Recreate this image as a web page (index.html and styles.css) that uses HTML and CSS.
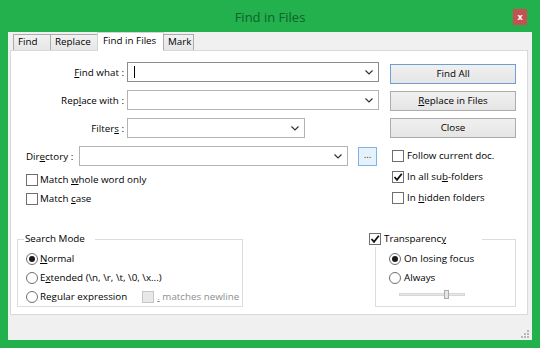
FILE: index.html
```html
<!DOCTYPE html>
<html lang="en">
<head>
    <meta charset="UTF-8">
    <title>Find in Files</title>
    <link rel="stylesheet" href="styles.css">
</head>
<body>
    <div class="window">
        <!-- Title bar -->
        <div class="titlebar">
            <span class="title">Find in Files</span>
            <span class="close">x</span>
        </div>

        <div class="client">
            <!-- Tabs -->
            <div class="tabs">
                <div class="tab tab-find">Find</div>
                <div class="tab tab-replace">Replace</div>
                <div class="tab tab-files active">Find in Files</div>
                <div class="tab tab-mark">Mark</div>
            </div>

            <div class="panel">
                <div class="top">
                    <div class="fields">
                        <div class="row">
                            <span class="lbl"><u>F</u>ind what :</span>
                            <div class="combo combo-wide focus">
                                <span class="caret"></span>
                                <svg class="chev" width="8" height="5" viewBox="0 0 8 5"><polyline points="0.5,0.5 4,4 7.5,0.5" fill="none" stroke="#333" stroke-width="1.2"/></svg>
                            </div>
                        </div>
                        <div class="row">
                            <span class="lbl">Rep<u>l</u>ace with :</span>
                            <div class="combo combo-wide">
                                <svg class="chev" width="8" height="5" viewBox="0 0 8 5"><polyline points="0.5,0.5 4,4 7.5,0.5" fill="none" stroke="#333" stroke-width="1.2"/></svg>
                            </div>
                        </div>
                        <div class="row">
                            <span class="lbl">Filter<u>s</u> :</span>
                            <div class="combo combo-filters">
                                <svg class="chev" width="8" height="5" viewBox="0 0 8 5"><polyline points="0.5,0.5 4,4 7.5,0.5" fill="none" stroke="#333" stroke-width="1.2"/></svg>
                            </div>
                        </div>
                        <div class="row row-dir">
                            <span class="lbl lbl-dir">Dir<u>e</u>ctory :</span>
                            <div class="combo combo-dir">
                                <svg class="chev" width="8" height="5" viewBox="0 0 8 5"><polyline points="0.5,0.5 4,4 7.5,0.5" fill="none" stroke="#333" stroke-width="1.2"/></svg>
                            </div>
                            <div class="browse">...</div>
                        </div>
                        <div class="check"><span class="box"></span><span>Match <u>w</u>hole word only</span></div>
                        <div class="check"><span class="box"></span><span>Match <u>c</u>ase</span></div>
                    </div>

                    <div class="actions">
                        <div class="btn default">Find All</div>
                        <div class="btn"><u>R</u>eplace in Files</div>
                        <div class="btn">Close</div>
                        <div class="check check-right"><span class="box"></span><span>Follow current doc.</span></div>
                        <div class="check check-right"><span class="box checked"><svg width="10" height="10" viewBox="0 0 10 10"><polyline points="1.5,5 4,7.8 8.8,1.8" fill="none" stroke="#111" stroke-width="1.8"/></svg></span><span>In all su<u>b</u>-folders</span></div>
                        <div class="check check-right"><span class="box"></span><span>In <u>h</u>idden folders</span></div>
                    </div>
                </div>

                <div class="groups">
                    <fieldset class="group group-mode">
                        <legend>Search Mode</legend>
                        <div class="radio"><span class="dot on"></span><span><u>N</u>ormal</span></div>
                        <div class="radio"><span class="dot"></span><span>E<u>x</u>tended (\n, \r, \t, \0, \x...)</span></div>
                        <div class="radio"><span class="dot"></span><span>Re<u>g</u>ular expression</span>
                            <span class="box disabled"></span><span class="muted"><u>.</u> matches newline</span>
                        </div>
                    </fieldset>

                    <fieldset class="group group-trans">
                        <legend><span class="box checked"><svg width="10" height="10" viewBox="0 0 10 10"><polyline points="1.5,5 4,7.8 8.8,1.8" fill="none" stroke="#111" stroke-width="1.8"/></svg></span><span>Transparenc<u>y</u></span></legend>
                        <div class="radio"><span class="dot on"></span><span>On losing focus</span></div>
                        <div class="radio"><span class="dot"></span><span>Always</span></div>
                        <div class="slider">
                            <div class="track"><span class="thumb"></span></div>
                        </div>
                    </fieldset>
                </div>
            </div>

            <div class="status">
                <svg class="grip" width="8" height="8" viewBox="0 0 8 8">
                    <rect x="6" y="0" width="2" height="2" fill="#b9b9b9"/>
                    <rect x="3" y="3" width="2" height="2" fill="#b9b9b9"/>
                    <rect x="6" y="3" width="2" height="2" fill="#b9b9b9"/>
                    <rect x="0" y="6" width="2" height="2" fill="#b9b9b9"/>
                    <rect x="3" y="6" width="2" height="2" fill="#b9b9b9"/>
                    <rect x="6" y="6" width="2" height="2" fill="#b9b9b9"/>
                </svg>
            </div>
        </div>
    </div>
</body>
</html>
```

FILE: styles.css
```css
body {
    margin: 0;
    font-family: 'Open Sans', sans-serif;
    font-size: 9.8px;
    color: #000;
}

u {
    text-decoration: underline;
    text-underline-offset: 1px;
}

.window {
    width: 540px;
    height: 348px;
    background: #22b14c;
    display: flex;
    flex-direction: column;
}

/* Title bar */

.titlebar {
    height: 32px;
    display: grid;
    grid-template-columns: 1fr auto 1fr;
    align-items: center;
}

.title {
    grid-column: 2;
    font-size: 13px;
    color: #11612a;
    padding-top: 1px;
}

.close {
    grid-column: 3;
    justify-self: end;
    margin-right: 13px;
    margin-top: 2px;
    width: 14px;
    height: 16px;
    background: #c75050;
    color: #fff;
    font-size: 9px;
    font-weight: bold;
    line-height: 15px;
    text-align: center;
}

/* Client area */

.client {
    flex: 1;
    margin: 0 8px 8px;
    background: #f0f0f0;
    display: flex;
    flex-direction: column;
}

.tabs {
    height: 18px;
    display: flex;
    align-items: flex-end;
    padding-left: 5px;
    position: relative;
    z-index: 1;
}

.tab {
    height: 16px;
    box-sizing: border-box;
    border: 1px solid #acacac;
    border-bottom: none;
    margin-left: -1px;
    padding-left: 4px;
    line-height: 14px;
    background: linear-gradient(#f2f2f2, #e6e6e6);
}

.tab-find { width: 38px; margin-left: 0; }
.tab-replace { width: 48px; }
.tab-files { width: 67px; }
.tab-mark { width: 31px; }

.tab.active {
    height: 19px;
    margin-bottom: -1px;
    background: #fff;
    border-color: #d4d4d4;
    line-height: 16px;
    padding-left: 5px;
}

.panel {
    flex: 1;
    background: #fff;
    border: 1px solid #d9d9d9;
    margin: 0 4px 0 2px;
    padding: 11px 11px 7px 6px;
    display: flex;
    flex-direction: column;
}

.top {
    display: flex;
    gap: 10px;
}

.fields {
    flex: 1;
    padding-left: 9px;
}

.row {
    display: flex;
    align-items: center;
    height: 20px;
    margin-bottom: 8px;
}

.row-dir {
    margin-bottom: 4px;
}

.lbl {
    width: 101px;
    flex: none;
    box-sizing: border-box;
    text-align: right;
    padding-right: 3px;
}

.lbl-dir {
    width: 53px;
    text-align: left;
    padding-right: 0;
}

.combo {
    height: 20px;
    box-sizing: border-box;
    border: 1px solid #b4b4b4;
    background: #fff;
    display: flex;
    align-items: center;
    padding: 0 5px 0 6px;
}

.combo.focus {
    border-color: #8c8c8c;
}

.chev {
    margin-left: auto;
}

.caret {
    width: 1px;
    height: 12px;
    background: #000;
}

.combo-wide { width: 252px; }
.combo-filters { width: 178px; }
.combo-dir { width: 269px; }

.browse {
    width: 19px;
    height: 19px;
    box-sizing: border-box;
    margin-left: 10px;
    border: 1px solid #7eb4ea;
    background: #e5f1fb;
    text-align: center;
    line-height: 14px;
    color: #333;
}

.check {
    display: flex;
    align-items: center;
    height: 19px;
    gap: 2px;
    white-space: nowrap;
}

.box {
    width: 12px;
    height: 12px;
    box-sizing: border-box;
    border: 1px solid #6f6f6f;
    background: #fff;
    display: inline-flex;
    align-items: center;
    justify-content: center;
    flex: none;
}

.box.disabled {
    border-color: #c6c6c6;
    background: #e8e8e8;
    margin-left: 13px;
    margin-right: 1px;
}

.muted {
    color: #8d8d8d;
}

/* Right column */

.actions {
    width: 126px;
    padding-top: 2px;
    display: flex;
    flex-direction: column;
}

.btn {
    height: 20px;
    box-sizing: border-box;
    margin-bottom: 7px;
    border: 1px solid #acacac;
    background: linear-gradient(#f0f0f0, #e5e5e5);
    text-align: center;
    line-height: 18px;
}

.btn.default {
    border-color: #6f9fd0;
}

.check-right {
    height: 21px;
    padding-left: 2px;
    gap: 3px;
}

/* Group boxes */

.groups {
    margin-top: auto;
    display: flex;
    justify-content: space-between;
}

.group {
    margin: 0;
    min-width: 0;
    border: 1px solid #dcdcdc;
    padding: 2px 0 0 6px;
    height: 76px;
    box-sizing: border-box;
}

.group legend {
    padding: 0 10px 0 1px;
    line-height: 16px;
}

.group-mode {
    width: 226px;
}

.group-mode .radio {
    margin-left: 2px;
}

.group-trans {
    width: 141px;
    padding-left: 13px;
}

.group-trans legend {
    margin-left: -20px;
    width: 113px;
    box-sizing: border-box;
    padding: 0;
    display: flex;
    align-items: center;
    gap: 3px;
}

.group-trans .radio {
    gap: 3px;
}

.radio {
    display: flex;
    align-items: center;
    height: 19px;
    gap: 2px;
    white-space: nowrap;
}

.dot {
    width: 12px;
    height: 12px;
    box-sizing: border-box;
    border: 1px solid #6f6f6f;
    border-radius: 50%;
    background: #fff;
    display: inline-flex;
    align-items: center;
    justify-content: center;
    flex: none;
}

.dot.on::after {
    content: '';
    width: 6px;
    height: 6px;
    border-radius: 50%;
    background: #1a1a1a;
}

.slider {
    height: 19px;
    display: flex;
    align-items: center;
    padding-left: 10px;
    padding-bottom: 4px;
    box-sizing: border-box;
}

.track {
    width: 66px;
    height: 3px;
    box-sizing: border-box;
    border: 1px solid #d6d6d6;
    background: #e7eaea;
    display: flex;
    align-items: center;
}

.thumb {
    margin-left: 44px;
    width: 5px;
    height: 9px;
    flex: none;
    box-sizing: border-box;
    border: 1px solid #acacac;
    background: #e6e6e6;
}

/* Bottom strip */

.status {
    height: 23px;
    display: flex;
    justify-content: flex-end;
    align-items: flex-end;
    padding: 0 3px 2px 0;
}
```
